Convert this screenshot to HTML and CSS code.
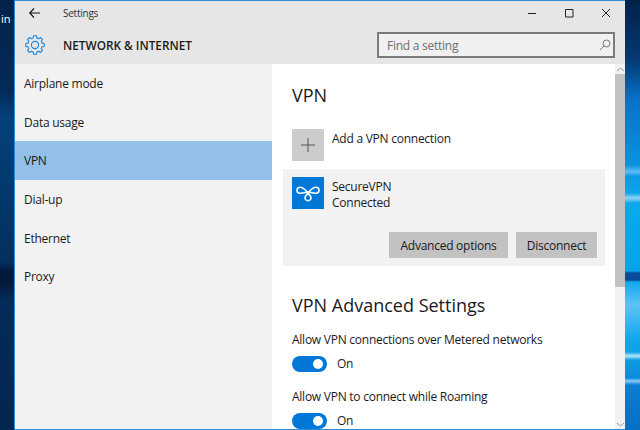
FILE: index.html
```html
<!DOCTYPE html>
<html lang="en">
<head>
<meta charset="utf-8">
<title>Settings</title>
<link rel="stylesheet" href="styles.css">
</head>
<body>
<div class="desktop">
  <div class="strip strip-left"><span class="desk-label">in</span></div>
  <div class="window">
    <header class="titlebar">
      <svg class="back" width="11" height="10" viewBox="0 0 11 10"><path d="M5 .5.700 5 5 9.500M.7 5H11" fill="none" stroke="#111" stroke-width="1.100"/></svg>
      <span class="app-name">Settings</span>
      <div class="controls">
        <svg width="10" height="10" viewBox="0 0 10 10"><path d="M1 5.500h8" stroke="#222" stroke-width="1"/></svg>
        <svg width="10" height="10" viewBox="0 0 10 10"><path d="M1.500 1.500h7.500v7.500h-7.500z" fill="none" stroke="#222" stroke-width="1"/></svg>
        <svg width="10" height="10" viewBox="0 0 10 10"><path d="m1 1 8 8M9 1 1 9" stroke="#222" stroke-width="1"/></svg>
      </div>
    </header>
    <div class="headbar">
      <svg class="gear" width="20" height="20" viewBox="0 0 20 20"><g transform="translate(10 10)" fill="none" stroke="#1a86dc" stroke-width="1.100" stroke-linejoin="round"><polygon points="6.950,-1.860 9.190,-1.450 9.190,1.450 6.950,1.860 6.240,3.600 7.520,5.470 5.470,7.520 3.600,6.240 1.860,6.950 1.450,9.190 -1.450,9.190 -1.860,6.950 -3.600,6.240 -5.470,7.520 -7.520,5.470 -6.240,3.600 -6.950,1.860 -9.190,1.450 -9.190,-1.450 -6.950,-1.860 -6.240,-3.600 -7.520,-5.470 -5.470,-7.520 -3.600,-6.240 -1.860,-6.950 -1.450,-9.190 1.450,-9.190 1.860,-6.950 3.600,-6.240 5.470,-7.520 7.520,-5.470 6.240,-3.600"/><circle r="3.600"/></g></svg>
      <h1 class="section-title">NETWORK &amp; INTERNET</h1>
      <div class="search"><span>Find a setting</span>
        <svg width="12" height="12" viewBox="0 0 12 12"><circle cx="7.500" cy="4.500" r="3.500" fill="none" stroke="#777"/><path d="M5 7 1 11" stroke="#777"/></svg>
      </div>
    </div>
    <div class="body">
      <nav class="sidebar">
        <a class="nav-item">Airplane mode</a>
        <a class="nav-item">Data usage</a>
        <a class="nav-item active">VPN</a>
        <a class="nav-item">Dial-up</a>
        <a class="nav-item">Ethernet</a>
        <a class="nav-item">Proxy</a>
      </nav>
      <main class="content">
        <h2 class="heading heading-top">VPN</h2>
        <div class="add-row">
          <div class="add-tile"><svg width="14" height="14" viewBox="0 0 14 14"><path d="M7 0v14M0 7h14" stroke="#555" stroke-width="1"/></svg></div>
          <span class="add-label">Add a VPN connection</span>
        </div>
        <section class="vpn-card">
          <div class="vpn-info">
            <div class="vpn-tile"><svg width="24" height="20" viewBox="-12 -10 24 20"><path d="M-8-5.800C-4-5.800-1-2 2.700 3.500A3 3 0 1 1-2.700 3.500C1-2 4-5.800 8-5.800A3 3 0 0 1 8 .2C4 .2 2-1 0-1S-4 .2-8 .2A3 3 0 0 1-8-5.800z" fill="none" stroke="#fff" stroke-width="1.600"/></svg></div>
            <div class="vpn-text"><div>SecureVPN</div><div>Connected</div></div>
          </div>
          <div class="vpn-actions">
            <button class="btn btn-wide">Advanced options</button>
            <button class="btn">Disconnect</button>
          </div>
        </section>
        <h2 class="heading heading-adv">VPN Advanced Settings</h2>
        <div class="setting">
          <div class="setting-label">Allow VPN connections over Metered networks</div>
          <div class="toggle-row"><span class="toggle"><i class="knob"></i></span><span>On</span></div>
        </div>
        <div class="setting">
          <div class="setting-label">Allow VPN to connect while Roaming</div>
          <div class="toggle-row"><span class="toggle"><i class="knob"></i></span><span>On</span></div>
        </div>
      </main>
      <div class="scrollbar">
        <svg class="arrow arrow-up" width="9" height="5" viewBox="0 0 9 5"><path d="m1 4 3.500-3L8 4" fill="none" stroke="#999"/></svg>
        <div class="thumb"></div>
        <svg class="arrow arrow-down" width="9" height="5" viewBox="0 0 9 5"><path d="m1 1 3.500 3L8 1" fill="none" stroke="#999"/></svg>
      </div>
    </div>
  </div>
  <div class="strip strip-right"></div>
</div>
</body>
</html>
```
FILE: styles.css
```css
* { box-sizing: border-box; }
html, body { margin: 0; height: 100%; overflow: hidden; }
body { font-family: "Open Sans", "Noto Sans", sans-serif; font-size: 12px; letter-spacing: -0.25px; color: #1a1a1a; }
.desktop { display: flex; width: 640px; height: 430px; }
.strip { flex: none; }
.strip-left { width: 14px; padding-top: 13px; background: linear-gradient(#02234a 0, #032b58 90px, #04417a 118px, #033a70 180px, #03305f 262px, #01183c 272px, #011a3e 284px, #032c5a 300px, #03264f 430px); }
.desk-label { display: block; margin-left: 1px; color: #fff; font-size: 11px; line-height: 12px; letter-spacing: 0; }
.strip-right { width: 15px; background: linear-gradient(#02214a 0, #043a72 60px, #0872c8 100px, #0a92e0 165px, #5fbdf0 172px, #0a9ae6 176px, #0ba5ea 193px, #8fd6f5 198px, #0ba8ec 203px, #08a4ea 271px, #0a4c96 273px, #0a4c96 280px, #12a8ee 282px, #5cc4f4 305px, #10a6ec 340px, #0ea2e8 352px, #b4e4f8 356px, #0e9ce4 360px, #0b8adb 378px, #8ccaf0 381px, #0a7ed6 385px, #0670c6 430px); }
.window { width: 611px; height: 430px; display: flex; flex-direction: column; border: 1px solid #2a8bd8; border-right: 0; flex: none; }
.titlebar { height: 25px; background: #e6e6e6; display: flex; align-items: center; padding: 0 0 2px 14px; flex: none; }
.back { margin-right: 23px; }
.app-name { font-size: 10px; color: #333; }
.controls { margin-left: auto; display: flex; gap: 27px; padding-right: 14px; }
.headbar { height: 38px; background: #e6e6e6; display: flex; align-items: center; flex: none; padding-left: 10px; }
.gear { margin-right: 18px; }
.section-title { margin: 0; font-size: 11.800px; font-weight: 600; letter-spacing: 0; color: #1a1a1a; }
.search { margin-left: auto; margin-right: 10px; width: 238px; height: 26px; border: 2px solid #7a7a7a; background: #f0f0f0; display: flex; align-items: center; justify-content: space-between; padding: 0 2px 0 8px; color: #6e6e6e; }
.body { flex: 1; display: flex; min-height: 0; }
.sidebar { width: 257px; background: #f2f2f2; display: flex; flex-direction: column; flex: none; }
.nav-item { height: 38.600px; display: flex; align-items: center; padding: 1px 0 0 9px; flex: none; }
.nav-item.active { background: #92c0e8; }
.content { width: 343px; background: #fff; padding-left: 11px; overflow: hidden; flex: none; }
.heading { margin: 0 0 0 9px; font-size: 18px; font-weight: 400; line-height: 24px; letter-spacing: 0; }
.heading-top { margin-top: 19px; }
.add-row { display: flex; gap: 8px; margin: 22px 0 0 9px; }
.add-tile { width: 32px; height: 32px; background: #cccccc; display: flex; align-items: center; justify-content: center; }
.add-label { line-height: 16px; margin-top: 2px; }
.vpn-card { width: 322px; height: 97px; margin-top: 8px; background: #f2f2f2; padding: 8px 8px 8px 9px; display: flex; flex-direction: column; justify-content: space-between; }
.vpn-info { display: flex; gap: 8px; }
.vpn-tile { width: 32px; height: 32px; background: #0078d7; display: flex; align-items: center; justify-content: center; }
.vpn-text { line-height: 16px; margin-top: 2px; }
.vpn-actions { display: flex; justify-content: flex-end; gap: 8px; }
.btn { height: 26px; border: 0; background: #c2c2c2; font: inherit; letter-spacing: inherit; color: #1a1a1a; padding: 0; width: 81px; }
.btn-wide { width: 119px; }
.heading-adv { margin-top: 27px; }
.setting { margin-left: 9px; }
.heading-adv + .setting { margin-top: 15px; }
.setting-label { line-height: 16px; }
.toggle-row { display: flex; align-items: center; gap: 10px; margin: 7px 0 17px; }
.toggle { width: 35px; height: 16px; border-radius: 8px; background: #0078d7; display: flex; align-items: center; justify-content: flex-end; padding-right: 4px; }
.knob { width: 10px; height: 10px; border-radius: 50%; background: #fff; display: block; }
.scrollbar { width: 10px; flex: none; background: #f2f2f2; display: flex; flex-direction: column; align-items: center; }
.arrow { flex: none; }
.arrow-up { margin: 3px 0 2px; }
.arrow-down { margin: auto 0 2px; }
.thumb { width: 100%; height: 213px; background: #c2c2c2; flex: none; }
```
